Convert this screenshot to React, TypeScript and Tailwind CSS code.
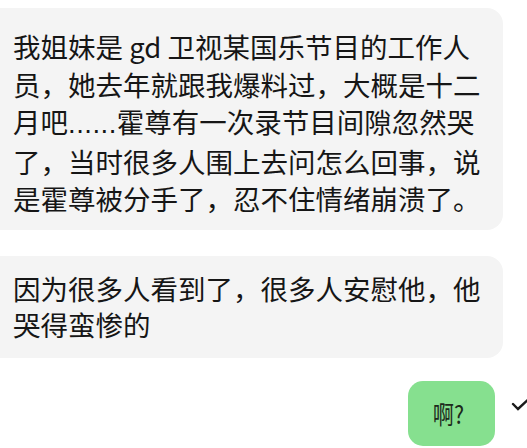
export default function App() {
  const font = { fontFamily: '"Noto Sans CJK SC", "Noto Sans", sans-serif' };
  return (
    <div
      className="w-[527px] h-[448px] bg-white overflow-hidden flex flex-col pt-[8px] text-[#161616]"
      style={font}
    >
      <div className="w-[503px] rounded-r-[16px] bg-[#f4f4f4] pl-[13px] pr-[20px] pt-[20px] pb-[12px] text-[27.5px] leading-[37.5px]">
        我姐妹是 gd 卫视某国乐节目的工作人员，她去年就跟我爆料过，大概是十二月吧
        <span className="font-['Liberation_Sans'] tracking-[0.5px]">......</span>
        霍尊有一次录节目间隙忽然哭了，当时很多人围上去问怎么回事，说是霍尊被分手了，忍不住情绪崩溃了。
      </div>
      <div className="mt-[26px] w-[503px] rounded-r-[16px] bg-[#f4f4f4] pl-[13px] pr-[20px] pt-[14px] pb-[16px] text-[27.5px] leading-[36px]">
        因为很多人看到了，很多人安慰他，他哭得蛮惨的
      </div>
      <div className="mt-[23px] flex items-center pl-[408px] gap-[16px]">
        <div className="w-[87px] h-[65px] shrink-0 rounded-[15px] bg-[#86e08f] flex items-center justify-center">
          <span className="text-[25px] leading-none text-[#1c2a1c] inline-block scale-x-[0.85] mr-[6px]">
            啊?
          </span>
        </div>
        <svg width="22" height="16" viewBox="0 0 22 16" className="shrink-0 -mt-[12px]">
          <path d="M2 5 L7 10 L20 -2" fill="none" stroke="#1a1a1a" strokeWidth="2.4" strokeLinecap="round" />
        </svg>
      </div>
    </div>
  );
}
